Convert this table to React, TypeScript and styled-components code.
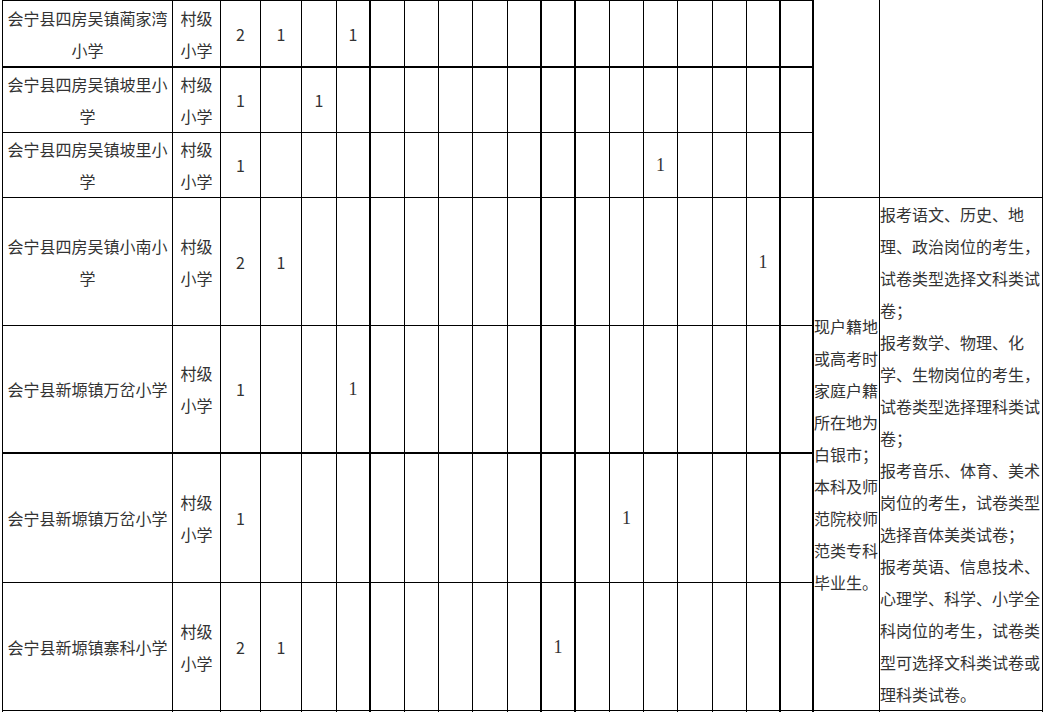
import React from "react";
import styled, { createGlobalStyle } from "styled-components";

const GlobalStyle = createGlobalStyle`
  html, body {
    margin: 0;
    padding: 0;
    background: #fff;
    overflow: hidden;
  }
  body {
    font-family: "Noto Sans CJK SC", "Noto Sans", sans-serif;
    font-size: 16px;
    color: #333;
  }
`;

// column widths in px, measured from the grid lines
const COLS = [170, 48, 40, 41, 35, 34, 34, 34, 34, 35, 34, 34, 34, 34, 34, 35, 34, 34, 33, 66, 163];
const ROWS = [68, 65, 65, 128, 128, 129, 128, 10];

// number columns whose right border is doubled
const THICK_NUM_COLS = [3, 8, 9, 15, 16];

interface IRow {
  name: string;
  kind: string;
  thickBottom?: boolean;
  nums: { [col: number]: { v: string; serif?: boolean } };
}

const rows: IRow[] = [
  {
    name: "会宁县四房吴镇蔺家湾小学",
    kind: "村级小学",
    thickBottom: true,
    nums: { 0: { v: "2" }, 1: { v: "1" }, 3: { v: "1" } },
  },
  {
    name: "会宁县四房吴镇坡里小学",
    kind: "村级小学",
    nums: { 0: { v: "1" }, 2: { v: "1" } },
  },
  {
    name: "会宁县四房吴镇坡里小学",
    kind: "村级小学",
    nums: { 0: { v: "1" }, 12: { v: "1", serif: true } },
  },
  {
    name: "会宁县四房吴镇小南小学",
    kind: "村级小学",
    nums: { 0: { v: "2" }, 1: { v: "1" }, 15: { v: "1", serif: true } },
  },
  {
    name: "会宁县新塬镇万岔小学",
    kind: "村级小学",
    thickBottom: true,
    nums: { 0: { v: "1" }, 3: { v: "1", serif: true } },
  },
  {
    name: "会宁县新塬镇万岔小学",
    kind: "村级小学",
    nums: { 0: { v: "1" }, 11: { v: "1", serif: true } },
  },
  {
    name: "会宁县新塬镇寨科小学",
    kind: "村级小学",
    nums: { 0: { v: "2" }, 1: { v: "1" }, 9: { v: "1", serif: true } },
  },
];

const requirement = [
  "现户籍地",
  "或高考时",
  "家庭户籍",
  "所在地为",
  "白银市；",
  "本科及师",
  "范院校师",
  "范类专科",
  "毕业生。",
];

const notes = [
  "报考语文、历史、地",
  "理、政治岗位的考生，",
  "试卷类型选择文科类试",
  "卷；",
  "报考数学、物理、化",
  "学、生物岗位的考生，",
  "试卷类型选择理科类试",
  "卷；",
  "报考音乐、体育、美术",
  "岗位的考生，试卷类型",
  "选择音体美类试卷；",
  "报考英语、信息技术、",
  "心理学、科学、小学全",
  "科岗位的考生，试卷类",
  "型可选择文科类试卷或",
  "理科类试卷。",
];

const Sheet = styled.div`
  display: grid;
  grid-template-columns: ${COLS.map((w) => w + "px").join(" ")};
  grid-template-rows: ${ROWS.map((h) => h + "px").join(" ")};
  width: max-content;
  margin-left: 2px;
  border-left: 1px solid #000;
`;

const Cell = styled.div<{
  $thickRight?: boolean;
  $thickBottom?: boolean;
  $top?: boolean;
  $noBottom?: boolean;
  $pad?: number;
}>`
  box-sizing: border-box;
  display: flex;
  align-items: center;
  justify-content: center;
  text-align: center;
  line-height: 32px;
  padding: 0 ${(p) => p.$pad ?? 0}px;
  border-right: ${(p) => (p.$thickRight ? 2 : 1)}px solid #000;
  border-bottom: ${(p) => (p.$noBottom ? 0 : p.$thickBottom ? 2 : 1)}px solid #000;
  border-top: ${(p) => (p.$top ? "1px solid #000" : "none")};
  overflow: hidden;
`;

const Num = styled.span<{ $serif?: boolean }>`
  font-family: ${(p) =>
    p.$serif ? `"Liberation Serif", serif` : `"Noto Sans CJK SC", "Noto Sans", sans-serif`};
  font-size: ${(p) => (p.$serif ? 18 : 16)}px;
`;

const SideCell = styled(Cell)<{ $span: number }>`
  grid-row: span ${(p) => p.$span};
`;

const TextBlock = styled.div<{ $top?: boolean }>`
  align-self: ${(p) => (p.$top ? "flex-start" : "center")};
  width: 100%;
  text-align: left;
  white-space: nowrap;
  line-height: 32px;
`;

const Lines: React.FC<{ lines: string[] }> = ({ lines }) => (
  <>
    {lines.map((l, i) => (
      <React.Fragment key={i}>
        {l}
        {i < lines.length - 1 && <br />}
      </React.Fragment>
    ))}
  </>
);

export default function App() {
  const numCols = Array.from({ length: 17 }, (_, i) => i);
  return (
    <>
      <GlobalStyle />
      <Sheet>
        {rows.map((row, ri) => (
          <React.Fragment key={ri}>
            <Cell $top={ri === 0} $thickBottom={row.thickBottom} $pad={3}>
              {row.name}
            </Cell>
            <Cell $top={ri === 0} $thickBottom={row.thickBottom} $pad={6}>
              {row.kind}
            </Cell>
            {numCols.map((c) => (
              <Cell
                key={c}
                $top={ri === 0}
                $thickBottom={row.thickBottom}
                $thickRight={THICK_NUM_COLS.includes(c)}
              >
                {row.nums[c] && <Num $serif={row.nums[c].serif}>{row.nums[c].v}</Num>}
              </Cell>
            ))}
            {ri === 0 && (
              <>
                <SideCell $span={3} />
                <SideCell $span={3} />
              </>
            )}
            {ri === 3 && (
              <>
                <SideCell $span={4}>
                  <TextBlock>
                    <Lines lines={requirement} />
                  </TextBlock>
                </SideCell>
                <SideCell $span={4}>
                  <TextBlock $top>
                    <Lines lines={notes} />
                  </TextBlock>
                </SideCell>
              </>
            )}
          </React.Fragment>
        ))}
        {COLS.map((_, c) => (
          <Cell
            key={"tail" + c}
            $noBottom
            $thickRight={c >= 2 && c <= 18 && THICK_NUM_COLS.includes(c - 2)}
          />
        ))}
      </Sheet>
    </>
  );
}
